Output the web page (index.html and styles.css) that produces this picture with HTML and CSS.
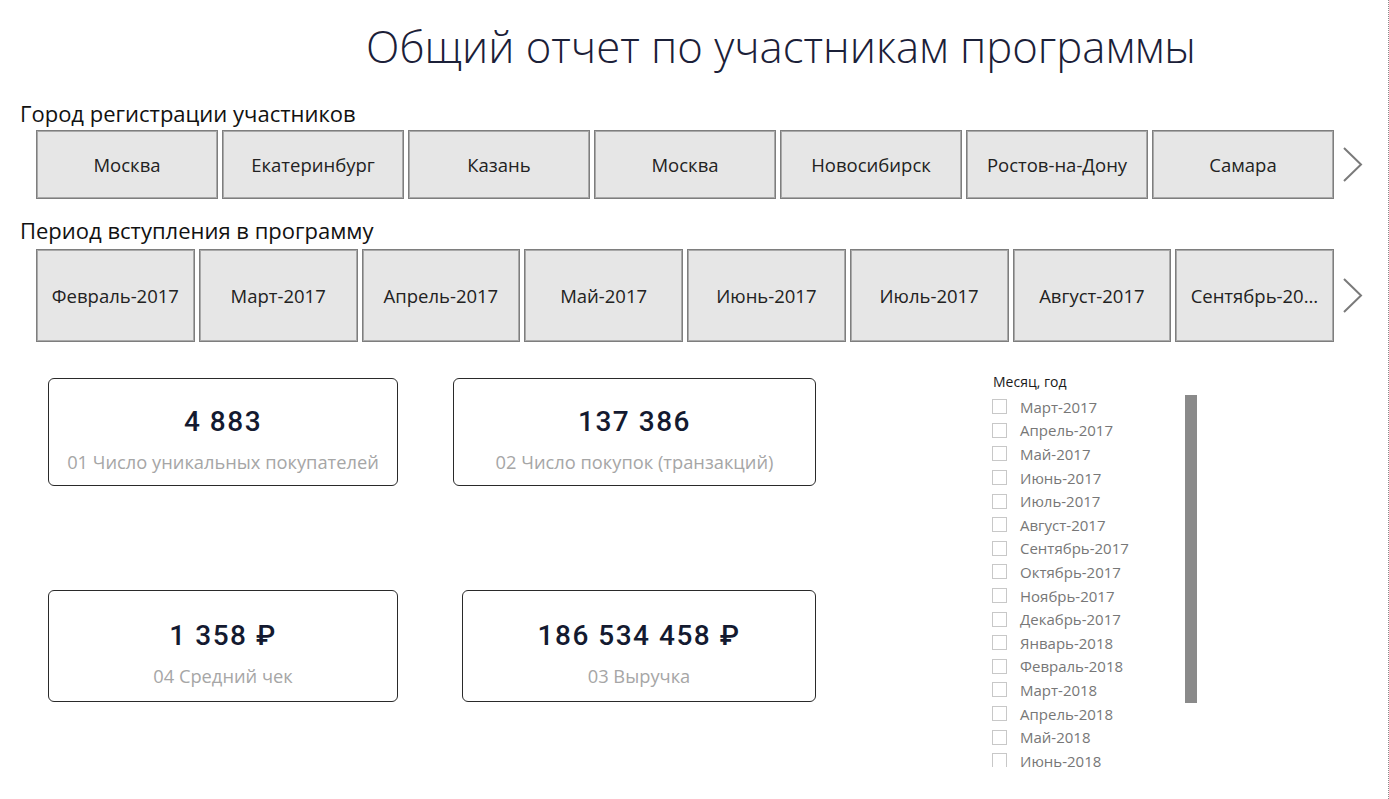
FILE: index.html
```html
<!DOCTYPE html>
<html lang="ru">
<head>
<meta charset="utf-8">
<title>Общий отчет по участникам программы</title>
<link rel="stylesheet" href="styles.css">
</head>
<body>
<div class="page">
  <h1 class="title">Общий отчет по участникам программы</h1>

  <div class="slicer-label label-city">Город регистрации участников</div>
  <div class="tiles tiles-city">
    <div class="tile">Москва</div>
    <div class="tile">Екатеринбург</div>
    <div class="tile">Казань</div>
    <div class="tile">Москва</div>
    <div class="tile">Новосибирск</div>
    <div class="tile">Ростов-на-Дону</div>
    <div class="tile">Самара</div>
    <svg class="chevron" width="24" height="37" viewBox="0 0 24 37"><path d="M3 2 L20 18.5 L3 35" fill="none" stroke="#7a7a7a" stroke-width="2"/></svg>
  </div>

  <div class="slicer-label label-period">Период вступления в программу</div>
  <div class="tiles tiles-period">
    <div class="tile">Февраль-2017</div>
    <div class="tile">Март-2017</div>
    <div class="tile">Апрель-2017</div>
    <div class="tile">Май-2017</div>
    <div class="tile">Июнь-2017</div>
    <div class="tile">Июль-2017</div>
    <div class="tile">Август-2017</div>
    <div class="tile"><span class="ellip">Сентябрь-2017</span></div>
    <svg class="chevron" width="24" height="37" viewBox="0 0 24 37"><path d="M3 2 L20 18.5 L3 35" fill="none" stroke="#7a7a7a" stroke-width="2"/></svg>
  </div>

  <div class="lower">
    <div class="cards">
      <div class="card-row row1">
        <div class="card c1"><div class="value">4 883</div><div class="caption">01 Число уникальных покупателей</div></div>
        <div class="card c2"><div class="value">137 386</div><div class="caption">02 Число покупок (транзакций)</div></div>
      </div>
      <div class="card-row row2">
        <div class="card c3"><div class="value">1 358 ₽</div><div class="caption">04 Средний чек</div></div>
        <div class="card c4"><div class="value">186 534 458 ₽</div><div class="caption">03 Выручка</div></div>
      </div>
    </div>

    <div class="list-slicer">
      <div class="list-head">Месяц, год</div>
      <div class="list-body">
        <div class="list-items">
          <div class="item"><span class="box"></span>Март-2017</div>
          <div class="item"><span class="box"></span>Апрель-2017</div>
          <div class="item"><span class="box"></span>Май-2017</div>
          <div class="item"><span class="box"></span>Июнь-2017</div>
          <div class="item"><span class="box"></span>Июль-2017</div>
          <div class="item"><span class="box"></span>Август-2017</div>
          <div class="item"><span class="box"></span>Сентябрь-2017</div>
          <div class="item"><span class="box"></span>Октябрь-2017</div>
          <div class="item"><span class="box"></span>Ноябрь-2017</div>
          <div class="item"><span class="box"></span>Декабрь-2017</div>
          <div class="item"><span class="box"></span>Январь-2018</div>
          <div class="item"><span class="box"></span>Февраль-2018</div>
          <div class="item"><span class="box"></span>Март-2018</div>
          <div class="item"><span class="box"></span>Апрель-2018</div>
          <div class="item"><span class="box"></span>Май-2018</div>
          <div class="item"><span class="box"></span>Июнь-2018</div>
        </div>
        <div class="scrollbar"></div>
      </div>
    </div>
  </div>
</div>
</body>
</html>
```

FILE: styles.css
```css
* { box-sizing: border-box; }
html, body { margin: 0; padding: 0; background: #fff; }
body {
  width: 1389px;
  height: 799px;
  overflow: hidden;
  font-family: "Open Sans", "Noto Sans", sans-serif;
  color: #222;
}
.page {
  width: 1389px;
  height: 799px;
  border-right: 1px dotted #8a8a8a;
  overflow: hidden;
}
.title {
  margin: 0;
  padding: 16px 0 0 366px;
  height: 100px;
  font-size: 43.7px;
  font-weight: 300;
  line-height: 60px;
  color: #1b2038;
  white-space: nowrap;
}
.slicer-label {
  padding-left: 20px;
  font-size: 22px;
  line-height: 26px;
  color: #111;
  white-space: nowrap;
}
.label-city { height: 30px; }
.label-period { height: 32px; }
.tiles {
  display: flex;
  gap: 4px;
  padding-left: 36px;
  align-items: center;
}
.tiles-city { height: 69px; margin-bottom: 18px; }
.tiles-period { height: 93px; }
.tile {
  flex: 0 0 auto;
  height: 100%;
  background: #e6e6e6;
  border: 1px solid #7e7e7e;
  box-shadow: inset 0 0 0 1px #a9a9a9;
  display: flex;
  align-items: center;
  justify-content: center;
  font-size: 18.5px;
  color: #222;
  white-space: nowrap;
  overflow: hidden;
}
.tiles-city .tile { width: 182px; }
.tiles-period .tile { width: 158.75px; }
.ellip {
  display: block;
  max-width: 128px;
  overflow: hidden;
  text-overflow: ellipsis;
}
.chevron { flex: 0 0 auto; margin-left: 3px; }

.lower {
  display: flex;
  padding-top: 36px;
}
.cards {
  width: 992px;
  padding-left: 48px;
}
.card-row { display: flex; }
.row1 { height: 108px; margin-bottom: 104px; }
.row2 { height: 112px; }
.card {
  border: 1.5px solid #2a2a2a;
  border-radius: 6px;
  display: flex;
  flex-direction: column;
  align-items: center;
  justify-content: flex-start;
  padding-top: 25px;
  height: 100%;
}
.row2 .card { padding-top: 27px; }
.c1 { width: 350px; }
.c2 { width: 363px; margin-left: 55px; }
.c3 { width: 350px; }
.c4 { width: 354px; margin-left: 64px; }
.value {
  font-family: Roboto, "DejaVu Sans", sans-serif;
  font-weight: 500;
  font-size: 28px;
  letter-spacing: 1.5px;
  line-height: 36px;
  color: #141a30;
}
.caption {
  margin-top: 10px;
  font-size: 18.3px;
  line-height: 24px;
  color: #a6a6a6;
  white-space: nowrap;
}

.list-slicer {
  width: 220px;
  margin-top: -6px;
}
.list-head {
  padding-left: 1px;
  height: 23px;
  font-size: 14px;
  line-height: 20px;
  color: #1a1a1a;
}
.list-body {
  display: flex;
  height: 372px;
  overflow: hidden;
}
.list-items { width: 193px; }
.item {
  display: flex;
  align-items: center;
  height: 23.6px;
  font-size: 15px;
  color: #777;
  white-space: nowrap;
}
.box {
  width: 15px;
  height: 15px;
  border: 1px solid #c8c8c8;
  margin-right: 13px;
  flex: 0 0 auto;
}
.scrollbar {
  width: 12px;
  height: 308px;
  background: #8a8a8a;
}
```
